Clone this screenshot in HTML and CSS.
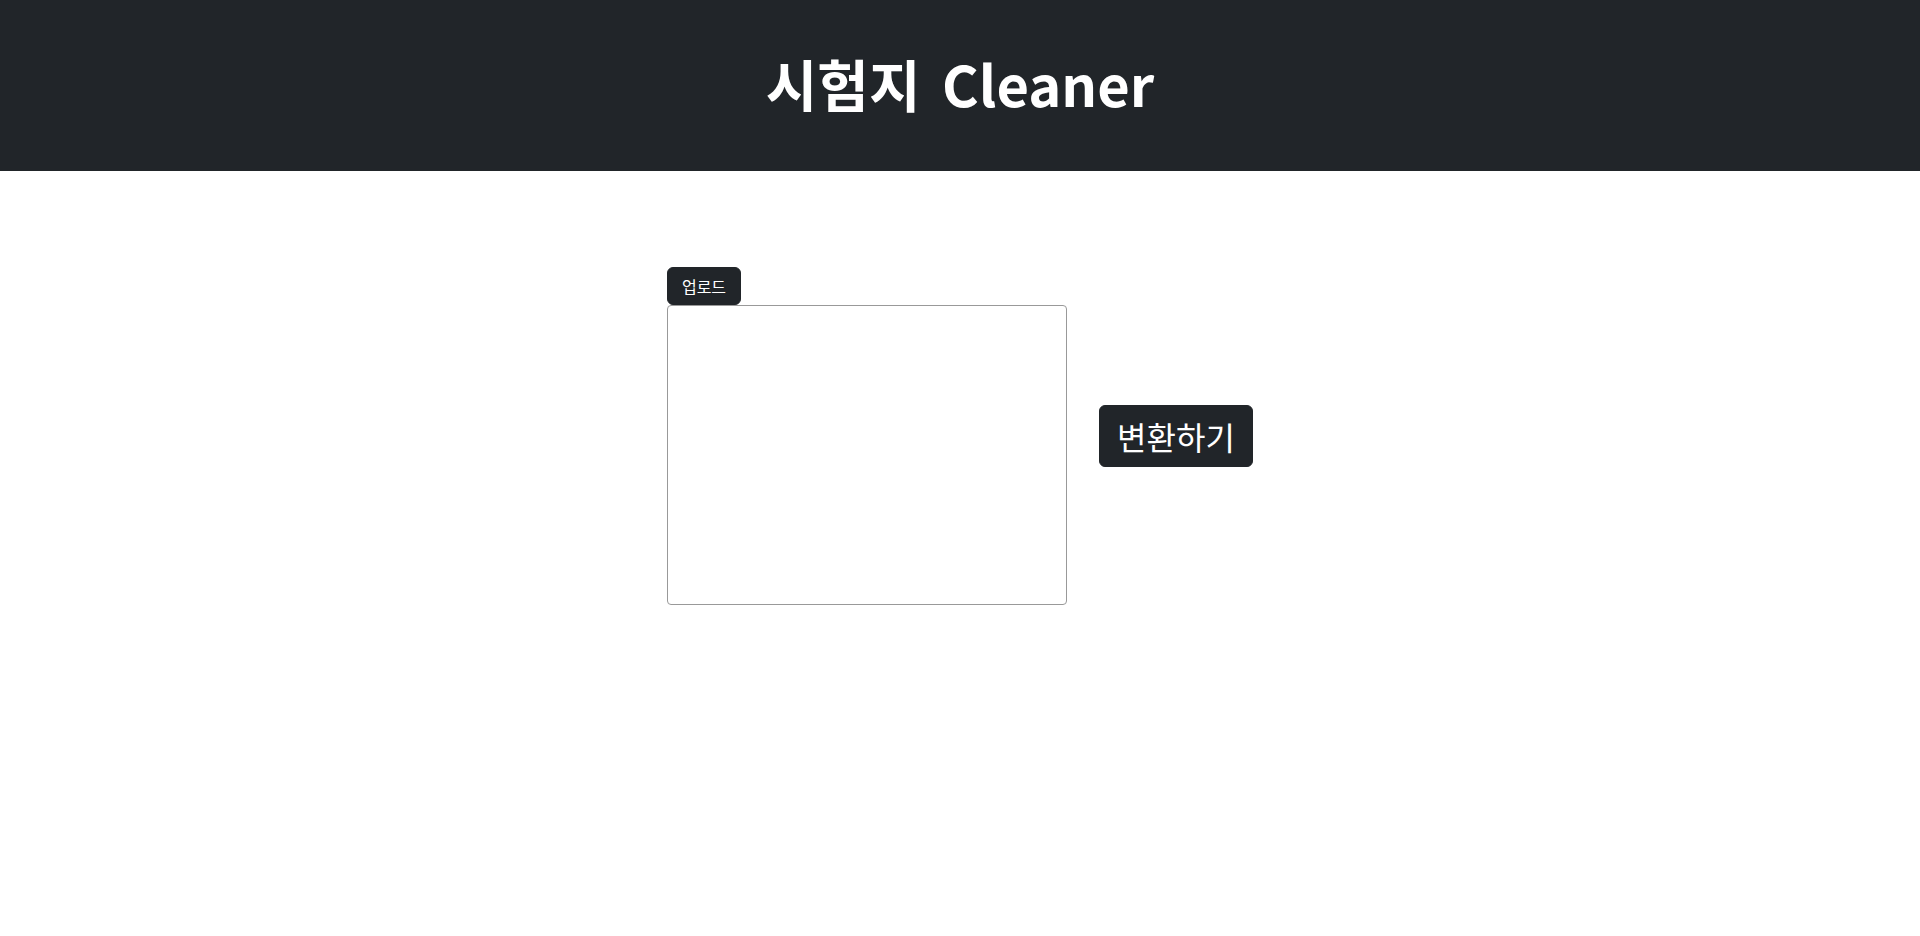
FILE: index.html
```html
<!DOCTYPE html>
<html lang="ko">
<head>
<meta charset="utf-8">
<title>시험지 Cleaner</title>
<link rel="stylesheet" href="styles.css">
</head>
<body>
<header class="header">
  <h1 class="title">시험지 Cleaner</h1>
</header>
<main class="main">
  <div class="workspace">
    <div class="upload-col">
      <button class="btn btn-upload" type="button">업로드</button>
      <textarea class="input-area"></textarea>
    </div>
    <button class="btn btn-convert" type="button">변환하기</button>
  </div>
</main>
</body>
</html>
```
FILE: styles.css
```css
* { box-sizing: border-box; }
html, body { margin: 0; padding: 0; }
body {
  font-family: "Noto Sans CJK KR", sans-serif;
  background: #fff;
  color: #212529;
}
.header {
  background: #212529;
  height: 171px;
  padding-bottom: 5px;
  display: flex;
  align-items: center;
  justify-content: center;
}
.title {
  margin: 0;
  color: #fff;
  font-size: 56px;
  font-weight: 700;
  line-height: 1.2;
  font-family: "Noto Sans CJK KR", sans-serif;
  word-spacing: 6px;
}
.main {
  padding-top: 96px;
  display: flex;
  justify-content: center;
}
.workspace {
  display: flex;
  align-items: center;
  gap: 32px;
}
.upload-col {
  display: flex;
  flex-direction: column;
  align-items: flex-start;
}
.btn {
  background: #212529;
  color: #fff;
  border: 1px solid #212529;
  border-radius: 6px;
  padding: 6px 12px;
  font-family: "Noto Sans CJK KR", sans-serif;
  font-size: 16px;
  line-height: 1.5;
  cursor: pointer;
}
.btn-upload {
  height: 38px;
  width: 74px;
  padding: 0;
  line-height: 36px;
}
.input-area {
  width: 400px;
  height: 300px;
  border: 1px solid #999;
  border-radius: 4px;
  resize: none;
  margin: 0;
  display: block;
}
.btn-convert {
  font-size: 32px;
  height: 62px;
  width: 154px;
  padding: 0;
  line-height: 60px;
}
```
